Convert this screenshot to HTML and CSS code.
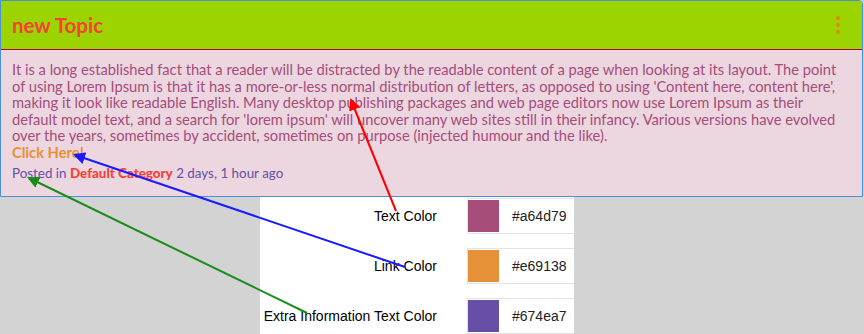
FILE: index.html
```html
<!DOCTYPE html>
<html lang="en">
<head>
    <meta charset="UTF-8">
    <meta name="viewport" content="width=device-width, initial-scale=1.0">
    <title>Topic Colors</title>
    <link rel="stylesheet" href="styles.css">
</head>
<body>
    <div class="topic-card">
        <div class="topic-header">
            <h1 class="topic-title">new Topic</h1>
            <span class="kebab"><i></i><i></i><i></i></span>
        </div>
        <div class="topic-body">
            <p class="topic-text">It is a long established fact that a reader will be distracted by the readable content of a page when looking at its layout. The point of using Lorem Ipsum is that it has a more-or-less normal distribution of letters, as opposed to using 'Content here, content here', making it look like readable English. Many desktop publishing packages and web page editors now use Lorem Ipsum as their default model text, and a search for 'lorem ipsum' will uncover many web sites still in their infancy. Various versions have evolved over the years, sometimes by accident, sometimes on purpose (injected humour and the like).</p>
            <a class="topic-link" href="#">Click Here!</a>
            <p class="topic-meta">Posted in <span class="category">Default Category</span> 2 days, 1 hour ago</p>
        </div>
    </div>

    <div class="legend">
        <div class="legend-row">
            <span class="legend-label">Text Color</span>
            <span class="legend-box">
                <span class="swatch" style="background:#a64d79"></span>
                <span class="hex">#a64d79</span>
            </span>
        </div>
        <div class="legend-row">
            <span class="legend-label">Link Color</span>
            <span class="legend-box">
                <span class="swatch" style="background:#e69138"></span>
                <span class="hex">#e69138</span>
            </span>
        </div>
        <div class="legend-row">
            <span class="legend-label">Extra Information Text Color</span>
            <span class="legend-box">
                <span class="swatch" style="background:#674ea7"></span>
                <span class="hex">#674ea7</span>
            </span>
        </div>
    </div>

    <svg class="arrows" width="864" height="334" viewBox="0 0 864 334">
        <defs>
            <marker id="head-red" markerWidth="6" markerHeight="6" refX="5" refY="3" orient="auto" viewBox="0 0 6 6">
                <path d="M0 0 L6 3 L0 6 Z" fill="#ff0000"/>
            </marker>
            <marker id="head-blue" markerWidth="6" markerHeight="6" refX="5" refY="3" orient="auto" viewBox="0 0 6 6">
                <path d="M0 0 L6 3 L0 6 Z" fill="#1a1aff"/>
            </marker>
            <marker id="head-green" markerWidth="6" markerHeight="6" refX="5" refY="3" orient="auto" viewBox="0 0 6 6">
                <path d="M0 0 L6 3 L0 6 Z" fill="#1a8c1a"/>
            </marker>
        </defs>
        <line x1="396" y1="211" x2="351" y2="100" stroke="#ff0000" stroke-width="2" marker-end="url(#head-red)"/>
        <line x1="405" y1="267" x2="75" y2="155" stroke="#1a1aff" stroke-width="2" marker-end="url(#head-blue)"/>
        <line x1="307" y1="313" x2="29" y2="178" stroke="#1a8c1a" stroke-width="2" marker-end="url(#head-green)"/>
    </svg>
</body>
</html>
```

FILE: styles.css
```css
:root {
    --text-color: #a64d79;
    --link-color: #e69138;
    --extra-color: #674ea7;
    --title-color: #f44336;
    --header-bg: #9bd400;
    --body-bg: #ecd6e0;
    --card-border: #4a90d9;
}

body {
    margin: 0;
    background-color: #d3d3d3;
    font-family: 'Lato', sans-serif;
    position: relative;
    height: 334px;
    overflow: hidden;
}

.topic-card {
    width: 861px;
    border: 1px solid var(--card-border);
    border-top-right-radius: 4px;
    background-color: var(--body-bg);
}

.topic-header {
    display: flex;
    align-items: center;
    justify-content: space-between;
    height: 48px;
    padding: 0 22px 0 11px;
    background-color: var(--header-bg);
    border-bottom: 1px solid #b0003a;
    border-top-right-radius: 3px;
}

.topic-title {
    margin: 0;
    font-size: 20.5px;
    font-weight: 700;
    color: var(--title-color);
}

.kebab {
    display: flex;
    flex-direction: column;
    gap: 3px;
}

.kebab i {
    display: block;
    width: 4px;
    height: 4px;
    border-radius: 50%;
    background-color: #e08a00;
}

.topic-body {
    padding: 11px 11px 15px;
    font-size: 14.7px;
    line-height: 16.6px;
}

.topic-text {
    margin: 0;
    color: var(--text-color);
}

.topic-link {
    display: block;
    color: var(--link-color);
    font-weight: 700;
    text-decoration: none;
}

.topic-meta {
    margin: 4px 0 0;
    font-size: 13.4px;
    color: var(--extra-color);
}

.category {
    color: var(--title-color);
    font-weight: 900;
}

.legend {
    width: 314px;
    margin-left: 260px;
    padding-top: 1px;
    background-color: #fff;
    font-family: 'Liberation Sans', Arial, sans-serif;
    font-size: 14px;
}

.legend-row {
    display: flex;
    align-items: center;
    margin-bottom: 14px;
}

.legend-label {
    width: 177px;
    text-align: right;
    color: #000;
}

.legend-box {
    display: flex;
    align-items: center;
    margin-left: 30px;
    flex: 1;
    border: 1px solid #e3e3e3;
    border-right: none;
    padding: 1px 0;
}

.swatch {
    display: block;
    width: 31px;
    height: 32px;
}

.hex {
    padding-left: 13px;
    color: #222;
}

.arrows {
    position: absolute;
    top: 0;
    left: 0;
    pointer-events: none;
}
```
